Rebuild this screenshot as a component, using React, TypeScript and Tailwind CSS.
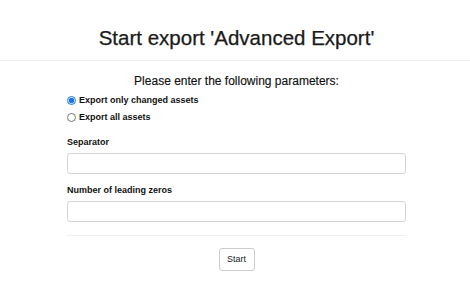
import React from 'react'

export default function App() {
  return (
    <div className="w-[470px] h-[300px] bg-white text-[#222] font-['Liberation_Sans',Arial,sans-serif]">
      <div className="h-[61px] border-b border-[#eee] pt-[26px] pl-[3px]">
        <h1 className="text-center text-[20.5px] leading-[24px] text-[#1a1a1a] [-webkit-text-stroke:0.25px_#1a1a1a]">
          Start export 'Advanced Export'
        </h1>
      </div>

      <div className="ml-[67px] w-[339px]">
        <p className="mt-[12px] text-center text-[12px] leading-[16px] text-[#111] [-webkit-text-stroke:0.15px_#111]">
          Please enter the following parameters:
        </p>

        <div className="mt-[3px]">
          <label className="flex h-[17px] items-center gap-[3px] text-[9px] font-bold text-[#111]">
            <input type="radio" name="mode" defaultChecked className="m-0 h-[9px] w-[9px] accent-[#1a73e8]" />
            Export only changed assets
          </label>
          <label className="flex h-[17px] items-center gap-[3px] text-[9px] font-bold text-[#111]">
            <input type="radio" name="mode" className="m-0 h-[9px] w-[9px]" />
            Export all assets
          </label>
        </div>

        <label className="mt-[10px] block text-[9px] font-bold leading-[12px] text-[#111]">Separator</label>
        <input type="text" className="mt-[5px] block h-[21px] w-full rounded-[3px] border border-[#d4d4d4] bg-white" />

        <label className="mt-[10px] block text-[9px] font-bold leading-[12px] text-[#111]">Number of leading zeros</label>
        <input type="text" className="mt-[5px] block h-[21px] w-full rounded-[3px] border border-[#d4d4d4] bg-white" />

        <div className="mt-[13px] h-px bg-[#eee]" />

        <div className="mt-[12px] flex justify-center">
          <button className="h-[23px] w-[36px] rounded-[3px] border border-[#ccc] bg-white text-[9px] text-[#222]">
            Start
          </button>
        </div>
      </div>
    </div>
  )
}
